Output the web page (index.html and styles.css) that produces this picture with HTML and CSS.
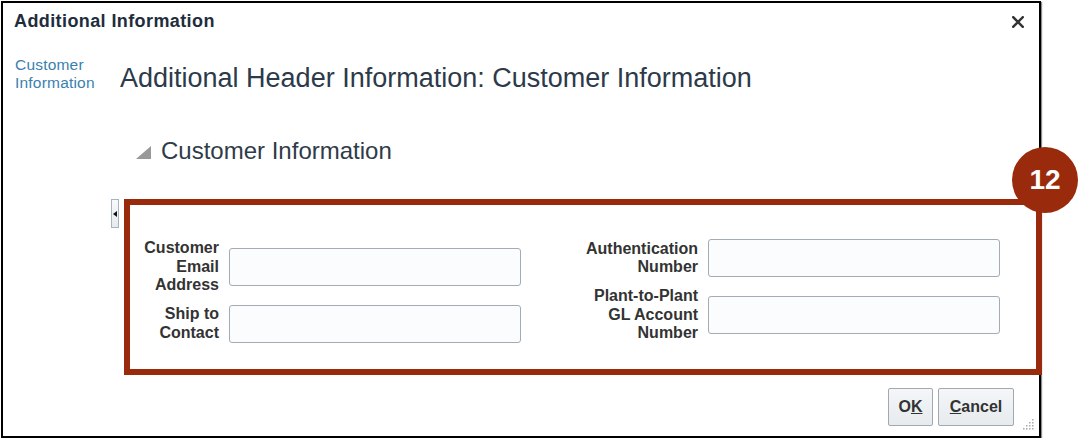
FILE: index.html
```html
<!DOCTYPE html>
<html lang="en">
<head>
<meta charset="utf-8">
<title>Additional Information</title>
<link rel="stylesheet" href="styles.css">
</head>
<body>
<div class="dialog">
  <div class="dlg-header">
    <div class="dlg-title">Additional Information</div>
    <svg class="close-icon" width="12" height="12" viewBox="0 0 12 12" aria-label="Close">
      <path d="M1.2 1.2 L10.8 10.8 M10.8 1.2 L1.2 10.8" stroke="#333" stroke-width="2.4" stroke-linecap="square"/>
    </svg>
  </div>
  <div class="dlg-body">
    <nav class="side-nav">
      <a class="nav-link">Customer<br>Information</a>
    </nav>
    <main class="main-col">
      <h1 class="page-heading">Additional Header Information: Customer Information</h1>
      <div class="section-heading">
        <svg class="disclosure" width="15" height="13" viewBox="0 0 15 13"><polygon points="15,0 15,13 0,13" fill="#999"/></svg>
        <span>Customer Information</span>
      </div>
      <div class="form-row">
        <div class="collapse-handle">
          <svg width="4" height="6" viewBox="0 0 4 6"><polygon points="4,0 4,6 0,3" fill="#111"/></svg>
        </div>
        <div class="highlight">
          <div class="field-group group-left">
            <label class="field-label">Customer<br>Email<br>Address</label>
            <input class="field-input" type="text">
            <label class="field-label">Ship to<br>Contact</label>
            <input class="field-input" type="text">
          </div>
          <div class="field-group group-right">
            <label class="field-label">Authentication<br>Number</label>
            <input class="field-input" type="text">
            <label class="field-label">Plant-to-Plant<br>GL Account<br>Number</label>
            <input class="field-input" type="text">
          </div>
          <div class="badge">12</div>
        </div>
      </div>
      <div class="button-row">
        <button class="btn btn-ok">O<u>K</u></button>
        <button class="btn btn-cancel"><u>C</u>ancel</button>
      </div>
    </main>
  </div>
  <svg class="grip" width="12" height="12" viewBox="0 0 12 12">
    <g fill="#a9a9a9">
      <rect x="10" y="1" width="1.5" height="1.5"/>
      <rect x="7" y="4" width="1.5" height="1.5"/><rect x="10" y="4" width="1.5" height="1.5"/>
      <rect x="4" y="7" width="1.5" height="1.5"/><rect x="7" y="7" width="1.5" height="1.5"/><rect x="10" y="7" width="1.5" height="1.5"/>
      <rect x="1" y="10" width="1.5" height="1.5"/><rect x="4" y="10" width="1.5" height="1.5"/><rect x="7" y="10" width="1.5" height="1.5"/><rect x="10" y="10" width="1.5" height="1.5"/>
    </g>
  </svg>
</div>
</body>
</html>
```
FILE: styles.css
```css
html, body {
  margin: 0;
  padding: 0;
  background: #fff;
}
body {
  font-family: "Liberation Sans", Arial, sans-serif;
}
.dialog {
  position: relative;
  box-sizing: border-box;
  margin: 1px 0 0 1px;
  width: 1040px;
  height: 437px;
  border: 2px solid #000;
  box-shadow: 1px 1px 1px rgba(0, 0, 0, 0.45);
  background: #fff;
}
.dlg-header {
  display: flex;
  justify-content: space-between;
  align-items: flex-start;
  padding: 7px 15px 0 11px;
  height: 22px;
}
.dlg-title {
  font-size: 18px;
  font-weight: bold;
  line-height: 22px;
  letter-spacing: 0.4px;
  color: #1e2d3e;
}
.close-icon {
  margin-top: 6px;
  display: block;
}
.dlg-body {
  display: flex;
  align-items: flex-start;
  padding-top: 24px;
}
.side-nav {
  box-sizing: border-box;
  width: 117px;
  flex: none;
  padding-left: 12px;
}
.nav-link {
  display: block;
  font-size: 15.5px;
  line-height: 18px;
  letter-spacing: 0.2px;
  color: #3a7fb0;
}
.main-col {
  flex: 1;
  min-width: 0;
  display: flex;
  flex-direction: column;
}
.page-heading {
  margin: 6px 0 0 0;
  font-size: 27px;
  font-weight: normal;
  line-height: 32px;
  color: #2c3a4a;
}
.section-heading {
  margin-top: 43px;
  padding-left: 16px;
  display: flex;
  align-items: center;
  gap: 10px;
  font-size: 24px;
  line-height: 28px;
  color: #2f3b48;
}
.disclosure {
  display: block;
  margin-top: 3px;
}
.form-row {
  margin-top: 34px;
  margin-left: -9px;
  display: flex;
  align-items: flex-start;
}
.collapse-handle {
  box-sizing: border-box;
  flex: none;
  width: 8px;
  height: 29px;
  margin-right: 5px;
  border: 1px solid #a7b3bd;
  background: linear-gradient(#f8fafb, #e6ebef);
  display: flex;
  align-items: center;
  justify-content: center;
}
.collapse-handle svg {
  display: block;
}
.highlight {
  position: relative;
  box-sizing: border-box;
  flex: none;
  width: 918px;
  height: 176px;
  border: 6px solid #9a2a0c;
  padding: 34px 0 0 4px;
  display: flex;
  align-items: flex-start;
  gap: 57px;
}
.field-group {
  display: grid;
  column-gap: 10px;
  row-gap: 10px;
  align-items: center;
}
.group-left {
  grid-template-columns: 85px 292px;
}
.group-right {
  grid-template-columns: 120px 292px;
}
.field-label {
  text-align: right;
  font-size: 16px;
  font-weight: bold;
  line-height: 18.5px;
  color: #333;
}
.field-input {
  box-sizing: border-box;
  width: 292px;
  height: 38px;
  margin: 0;
  border: 1px solid #a3acb4;
  border-radius: 3px;
  background: #fafcfd;
}
.badge {
  position: absolute;
  left: 882px;
  top: -58px;
  width: 66px;
  height: 66px;
  border-radius: 50%;
  background: #9a2a0c;
  color: #fff;
  font-size: 28px;
  font-weight: bold;
  display: flex;
  align-items: center;
  justify-content: center;
}
.button-row {
  margin-top: 13px;
  margin-right: 25px;
  display: flex;
  justify-content: flex-end;
  gap: 5px;
}
.btn {
  box-sizing: border-box;
  height: 38px;
  padding: 0;
  border: 1px solid #a0a9b1;
  border-radius: 2px;
  background: linear-gradient(#f4f6f8, #e7ebee);
  font-family: "Liberation Sans", Arial, sans-serif;
  font-size: 16px;
  font-weight: bold;
  color: #333;
}
.btn-ok {
  width: 45px;
}
.btn-cancel {
  width: 76px;
}
.grip {
  position: absolute;
  right: 5px;
  bottom: 6px;
  display: block;
}
```
